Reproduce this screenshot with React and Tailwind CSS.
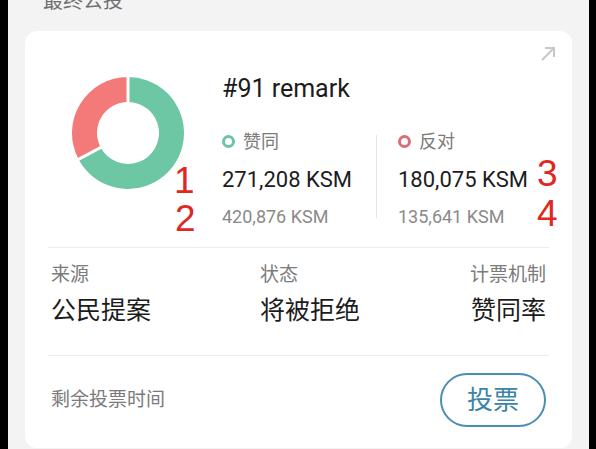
import React from "react"

const FONT = { fontFamily: "Roboto, 'Noto Sans CJK SC', sans-serif" }

// point on a circle, angle measured clockwise from 12 o'clock
const pt = (cx, cy, r, deg) => {
  const a = (deg * Math.PI) / 180
  return [cx + r * Math.sin(a), cy - r * Math.cos(a)]
}

const sector = (cx, cy, R, r, from, to) => {
  const large = to - from > 180 ? 1 : 0
  const [x1, y1] = pt(cx, cy, R, from)
  const [x2, y2] = pt(cx, cy, R, to)
  const [x3, y3] = pt(cx, cy, r, to)
  const [x4, y4] = pt(cx, cy, r, from)
  return `M${x1} ${y1} A${R} ${R} 0 ${large} 1 ${x2} ${y2} L${x3} ${y3} A${r} ${r} 0 ${large} 0 ${x4} ${y4} Z`
}

const Donut = () => {
  const split = 242
  const [gx, gy] = pt(56, 56, 60, split)
  return (
    <svg width="112" height="112" viewBox="0 0 112 112">
      <path d={sector(56, 56, 56, 31, 0, split)} fill="#6dc6a4" />
      <path d={sector(56, 56, 56, 31, split, 360)} fill="#f37a78" />
      <line x1="56" y1="56" x2="56" y2="-4" stroke="#fff" strokeWidth="3" />
      <line x1="56" y1="56" x2={gx} y2={gy} stroke="#fff" strokeWidth="3" />
    </svg>
  )
}

const Ring = ({ color }) => (
  <span className={`w-[13px] h-[13px] rounded-full border-[3px] ${color}`} />
)

const Stat = ({ ring, label, value, sub }) => (
  <div className="flex flex-col">
    <div className="flex items-center gap-[8px] h-[24px]">
      <Ring color={ring} />
      <span className="text-[18px] text-[#7b7b7b]">{label}</span>
    </div>
    <div className="mt-[13px] text-[22px] leading-[28px] text-[#1c1c1c]">{value}</div>
    <div className="mt-[11px] text-[18px] leading-[24px] text-[#8a8a8a]">{sub}</div>
  </div>
)

const Info = ({ label, value, right }) => (
  <div className={`flex flex-col ${right ? 'items-end' : ''}`}>
    <span className="text-[19px] leading-[24px] text-[#7b7b7b]">{label}</span>
    <span className="mt-[8px] text-[25px] leading-[32px] text-[#1c1c1c]">{value}</span>
  </div>
)

const Mark = ({ n, className }) => (
  <span
    className={`absolute text-[37px] leading-none text-[#e0281f] ${className}`}
    style={{ fontFamily: "'Liberation Sans', sans-serif" }}
  >
    {n}
  </span>
)

export default function App() {
  return (
    <div className="relative w-[596px] h-[449px] bg-black flex overflow-hidden" style={FONT}>
      <div className="ml-[8px] w-[581px] h-full bg-[#f3f3f3] px-[17px] flex flex-col">
        <div className="mt-[-9px] h-[20px] pl-[18px] text-[20px] leading-[20px] text-[#707070]">最终公投</div>

        <div className="relative mt-[20px] h-[417px] bg-white rounded-[12px] px-[23px] flex flex-col">
          {/* open detail */}
          <svg className="absolute top-[15px] right-[16px]" width="16" height="16" viewBox="0 0 16 16" fill="none">
            <path d="M2 14 L14 2 M5 2 H14 V11" stroke="#c6c6cb" strokeWidth="2" />
          </svg>

          {/* votes */}
          <div className="h-[216px] pt-[46px] flex">
            <div className="ml-[24px]">
              <Donut />
            </div>
            <div className="ml-[38px] flex flex-col mt-[-3px]">
              <div className="text-[25px] leading-[30px] text-[#1c1c1c]">#91 remark</div>
              <div className="mt-[25px] flex">
                <div className="w-[154px]">
                  <Stat ring="border-[#6ec3a4]" label="赞同" value="271,208 KSM" sub="420,876 KSM" />
                </div>
                <div className="w-px h-[83px] mt-[6px] bg-[#e6e6e6]" />
                <div className="pl-[21px]">
                  <Stat ring="border-[#d96e78]" label="反对" value="180,075 KSM" sub="135,641 KSM" />
                </div>
              </div>
            </div>
          </div>

          <div className="h-px bg-[#ececec]" />

          {/* details */}
          <div className="h-[107px] pt-[15px] px-[3px] grid grid-cols-3">
            <Info label="来源" value="公民提案" />
            <div className="pl-[44px]">
              <Info label="状态" value="将被拒绝" />
            </div>
            <Info label="计票机制" value="赞同率" right />
          </div>

          <div className="h-px bg-[#ececec]" />

          {/* footer */}
          <div className="pt-[17px] px-[3px] flex items-center justify-between">
            <span className="text-[19px] leading-[24px] text-[#7b7b7b]">剩余投票时间</span>
            <button className="w-[106px] h-[54px] rounded-full border-2 border-[#4a8db5] text-[26px] text-[#3c84a8] flex items-center justify-center">
              投票
            </button>
          </div>
        </div>
      </div>

      <Mark n="1" className="left-[174px] top-[162px]" />
      <Mark n="2" className="left-[175px] top-[200px]" />
      <Mark n="3" className="left-[537px] top-[155px]" />
      <Mark n="4" className="left-[537px] top-[195px]" />
    </div>
  )
}
